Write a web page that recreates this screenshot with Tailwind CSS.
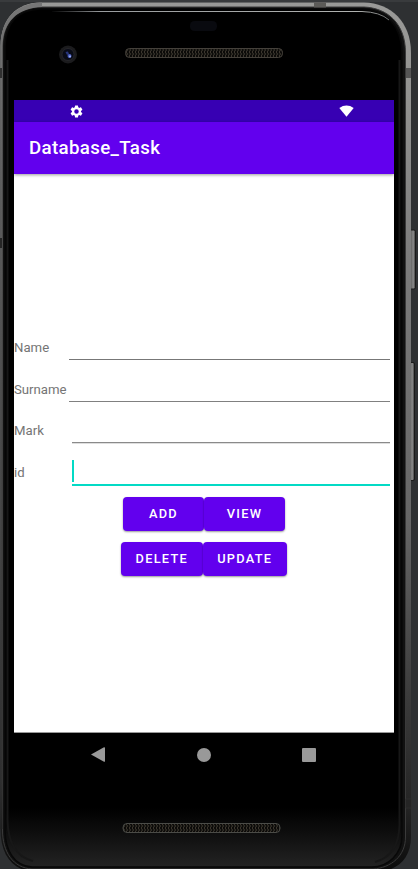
<!DOCTYPE html>
<html lang="en">
<head>
<meta charset="utf-8">
<title>Database_Task</title>
<script src="https://cdn.jsdelivr.net/npm/@tailwindcss/browser@4"></script>
</head>
<body class="relative h-[869px] w-[418px] overflow-hidden bg-[#2e3032] font-['Roboto',sans-serif]">
<!-- Device shell -->
<svg class="absolute inset-0" width="418" height="869" viewBox="0 0 418 869" fill="none">
  <defs>
    <linearGradient id="rim" x1="0" y1="0" x2="0" y2="869" gradientUnits="userSpaceOnUse">
      <stop offset="0" stop-color="#9a9a98"/><stop offset=".12" stop-color="#929290"/><stop offset=".3" stop-color="#7c7c7c"/><stop offset=".6" stop-color="#666"/><stop offset=".8" stop-color="#3c3c3c"/><stop offset=".93" stop-color="#242424"/><stop offset="1" stop-color="#0c0c0c"/>
    </linearGradient>
    <linearGradient id="rimL" x1="0" y1="0" x2="0" y2="869" gradientUnits="userSpaceOnUse">
      <stop offset="0" stop-color="#777"/><stop offset=".2" stop-color="#606060"/><stop offset=".5" stop-color="#484848"/><stop offset=".9" stop-color="#303030"/><stop offset="1" stop-color="#111"/>
    </linearGradient>
    <linearGradient id="chin" x1="0" y1="808" x2="0" y2="868" gradientUnits="userSpaceOnUse">
      <stop offset="0" stop-color="#000"/><stop offset=".5" stop-color="#111"/><stop offset="1" stop-color="#242424"/>
    </linearGradient>
    <linearGradient id="gloss" x1="50" y1="0" x2="390" y2="0" gradientUnits="userSpaceOnUse">
      <stop offset="0" stop-color="#8a8d90" stop-opacity="0"/><stop offset=".15" stop-color="#999c9e"/><stop offset=".9" stop-color="#b0b2b0"/><stop offset="1" stop-color="#6d706f"/>
    </linearGradient>
    <linearGradient id="key" x1="0" y1="0" x2="1" y2="0">
      <stop offset="0" stop-color="#555"/><stop offset=".6" stop-color="#8a8a8a"/><stop offset="1" stop-color="#333"/>
    </linearGradient>
    <pattern id="mesh" width="3" height="4" patternUnits="userSpaceOnUse">
      <path fill="#0c0b09" d="M0 0h3v4H0z"/><path d="M0 0l1.5 2L0 4" stroke="#50493e" stroke-width=".8"/>
    </pattern>
  </defs>
  <path d="M0 1h418" stroke="#454749" stroke-width="1"/>
  <rect x="410" y="230" width="5.5" height="59" rx="1.5" fill="url(#key)" stroke="#1b1b1b"/>
  <rect x="409" y="362.500" width="5.500" height="118" rx="1.500" fill="url(#key)" stroke="#1b1b1b"/>
  <path d="M40 2.500H364C391 3 411 22 411 53V837C411 858 398 870 379 872H32C12 869 .5 855 .5 829V46C1 18 17 3 40 2.500Z" fill="url(#rim)"/>
  <path d="M38 7H364C387 8 405.500 23 405.500 53V837C405.500 856 391 868 373 869H32C13 868 2.500 852 2.500 830V46C3 22 17 8 38 7Z" fill="#111" stroke="#3a3a3a"/>
  <path d="M.5 829V46C1 18 17 3 42 2.500V7C17 8 3 22 2.500 46V829Z" fill="url(#rimL)"/>
  <path d="M40 9H362C386 10 402 25 402 54V836C402 854 388 867 372 867H32C14 866 5 850 5 830V46C6 22 18 10 40 9Z" fill="url(#chin)" stroke="#080808" stroke-width="1.500"/>
  <path d="M7.500 60V820C8 842 16 857 33 861M399.500 60V825C399 846 390 858 375 862" stroke="#171717" stroke-width="2"/>
  <path d="M52 11.500H362Q380 12 389 20" stroke="url(#gloss)" stroke-width="1"/>
  <path d="M314 2.500h12v5h-12z" fill="#5c5b58"/>
  <path d="M406 68h5v10h-5z" fill="#555"/>
  <path d="M0 68h2v10H0z" fill="#303030"/>
  <path d="M405.500 799h6v9h-6z" fill="#252525" stroke="#343434" stroke-width=".5"/>
  <path d="M0 238h2v10H0z" fill="#262626"/>
  <rect x="190" y="21" width="27" height="10" rx="4.500" fill="#090a0f"/>
  <circle cx="68" cy="54.500" r="9" fill="#1b1b1d"/>
  <circle cx="68" cy="54.500" r="6" fill="#090b16" stroke="#2c2c30" stroke-width=".7"/>
  <path d="M65.500 52l2.500-.5 1 2.500-2 1z" fill="#27357c"/>
  <circle cx="69.500" cy="56" r="2" fill="#4a5fc0"/><circle cx="70" cy="56.500" r="1" fill="#a6b5f5"/>
  <rect x="125.500" y="48.500" width="157" height="9" rx="4" fill="url(#mesh)" stroke="#45413b"/>
  <rect x="123" y="823.500" width="157" height="9" rx="4" fill="url(#mesh)" stroke="#4a4b47"/>
</svg>

<!-- Screen -->
<main class="relative ml-[14px] flex w-[380px] flex-col pt-[100px]">
  <div class="flex h-[22px] items-center justify-between bg-[#3700b3] pr-[40px] pl-[55px]">
    <svg class="size-[15px]" viewBox="0 0 24 24" fill="#fff"><path d="M19.140 12.940c.04-.3.06-.61.06-.94s-.02-.64-.07-.94l2.030-1.580a.49.49 0 0 0 .12-.61l-1.920-3.320a.49.49 0 0 0-.59-.22l-2.390.96a7 7 0 0 0-1.620-.94l-.36-2.540a.48.48 0 0 0-.48-.41h-3.840a.47.47 0 0 0-.47.41l-.36 2.540c-.59.24-1.130.57-1.620.94l-2.390-.96a.48.48 0 0 0-.59.22L2.740 8.870a.47.47 0 0 0 .12.61l2.030 1.580a6 6 0 0 0 0 1.880l-2.030 1.580a.49.49 0 0 0-.12.61l1.920 3.320c.12.220.37.290.59.220l2.390-.96c.5.380 1.030.7 1.620.94l.36 2.540c.05.240.240.410.480.410h3.840c.240 0 .440-.170.470-.410l.36-2.540a7 7 0 0 0 1.620-.94l2.390.96c.220.080.470 0 .590-.220l1.920-3.320a.47.47 0 0 0-.12-.61zM12 15.600A3.600 3.600 0 1 1 12 8.400a3.600 3.600 0 0 1 0 7.200z"/></svg>
    <svg class="h-[12px] w-[15px]" viewBox="0 0 15 12" fill="#fff"><path d="M.3 2.900Q7.500-1.700 14.700 2.900L7.500 11.700z"/></svg>
  </div>
  <header class="relative flex h-[52px] items-center bg-[#6200ee] pl-[15px] shadow-[0_1px_3px_rgba(0,0,0,0.4)]">
    <h1 class="text-[18.700px] leading-none font-medium tracking-[0.350px] text-white">Database_Task</h1>
  </header>

  <section class="h-[559px] border-b border-[#999] bg-white pt-[153px] text-[13.200px] leading-[16px] text-[#757575]">
    <div class="flex h-[42px] pr-[4px]">
      <label for="name" class="w-[55px] pt-[13px]">Name</label>
      <input id="name" class="h-[33px] min-w-0 flex-1 border-b border-[#777] outline-none">
    </div>
    <div class="flex h-[41px] pr-[4px]">
      <label for="surname" class="w-[55px] pt-[13px]">Surname</label>
      <input id="surname" class="h-[33px] min-w-0 flex-1 border-b border-[#808080] outline-none">
    </div>
    <div class="flex h-[42px] pr-[4px]">
      <label for="mark" class="w-[58px] pt-[13px]">Mark</label>
      <input id="mark" class="h-[33px] min-w-0 flex-1 border-b border-[#8a8a8a] shadow-[0_1px_0_#dedede] outline-none">
    </div>
    <div class="flex h-[45px] pr-[4px]">
      <label for="id" class="w-[58px] pt-[13px]">id</label>
      <div id="id" class="h-[34px] flex-1 border-b-2 border-[#03dac5] pt-[8px]"><div class="h-[22px] w-[2px] bg-[#03dac5]"></div></div>
    </div>
    <div class="flex flex-col gap-[11px] text-[12.800px] font-medium tracking-[1.250px] text-white">
      <div class="flex pl-[109px]">
        <button class="h-[34px] w-[81px] rounded-[4px] bg-[#6200ee] shadow-[0_1px_2px_rgba(0,0,0,0.4)]">ADD</button>
        <button class="h-[34px] w-[81px] rounded-[4px] bg-[#6200ee] shadow-[0_1px_2px_rgba(0,0,0,0.4)]">VIEW</button>
      </div>
      <div class="flex pl-[107px]">
        <button class="h-[34px] w-[81.500px] rounded-[4px] bg-[#6200ee] shadow-[0_1px_2px_rgba(0,0,0,0.4)]">DELETE</button>
        <button class="h-[34px] w-[84.500px] rounded-[4px] bg-[#6200ee] shadow-[0_1px_2px_rgba(0,0,0,0.4)]">UPDATE</button>
      </div>
    </div>
  </section>

  <nav class="flex h-[43px] items-center justify-between bg-black pr-[78px] pl-[77px]">
    <svg class="h-[15px] w-[14px]" viewBox="0 0 14 15" fill="#999"><path d="M0 7.500L13 .2Q14 0 14 .8V14.200Q14 15 13 14.800Z"/></svg>
    <div class="size-[14px] rounded-full bg-[#999]"></div>
    <div class="size-[14px] rounded-[1px] bg-[#999]"></div>
  </nav>
</main>
</body>
</html>
